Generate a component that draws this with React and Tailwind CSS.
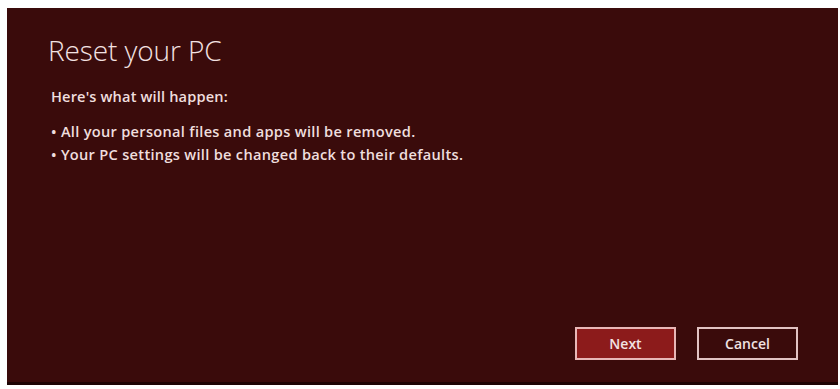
import React from "react";

const App = () => {
  return (
    <div className="w-[840px] h-[389px] bg-white overflow-hidden" style={{ fontFamily: '"Open Sans", "Noto Sans", sans-serif' }}>
      <div className="ml-[7px] mt-[8px] w-[831px] h-[377px] bg-[#3a0b0b] border-b-[3px] border-[#1e0505] flex flex-col">

        {/* Title */}
        <h1 className="ml-[41px] mt-[24px] text-[28px] leading-[36px] font-light text-[#f3e2e2] tracking-[-0.1px]">
          Reset your PC
        </h1>

        {/* Body */}
        <p className="ml-[44px] mt-[18px] text-[14.6px] leading-[20px] font-semibold text-[#efdede] tracking-[0.15px]">
          Here's what will happen:
        </p>

        <ul className="ml-[44px] mt-[15px] flex flex-col gap-[3px] text-[14.6px] leading-[20px] font-semibold text-[#efdede] tracking-[0.3px]">
          <li>• All your personal files and apps will be removed.</li>
          <li>• Your PC settings will be changed back to their defaults.</li>
        </ul>

        {/* Buttons */}
        <div className="mt-auto mb-[22px] mr-[40px] flex justify-end gap-[21px]">
          <button className="w-[101px] h-[33px] bg-[#8c1b1b] border-2 border-[#e8b7b7] text-[14px] font-semibold text-[#f3e3e3]">
            Next
          </button>
          <button className="w-[101px] h-[33px] bg-[#3a0b0b] border-2 border-[#e2c3c3] text-[14px] font-semibold text-[#f0e2e2]">
            Cancel
          </button>
        </div>
      </div>
    </div>
  );
};

export default App;
